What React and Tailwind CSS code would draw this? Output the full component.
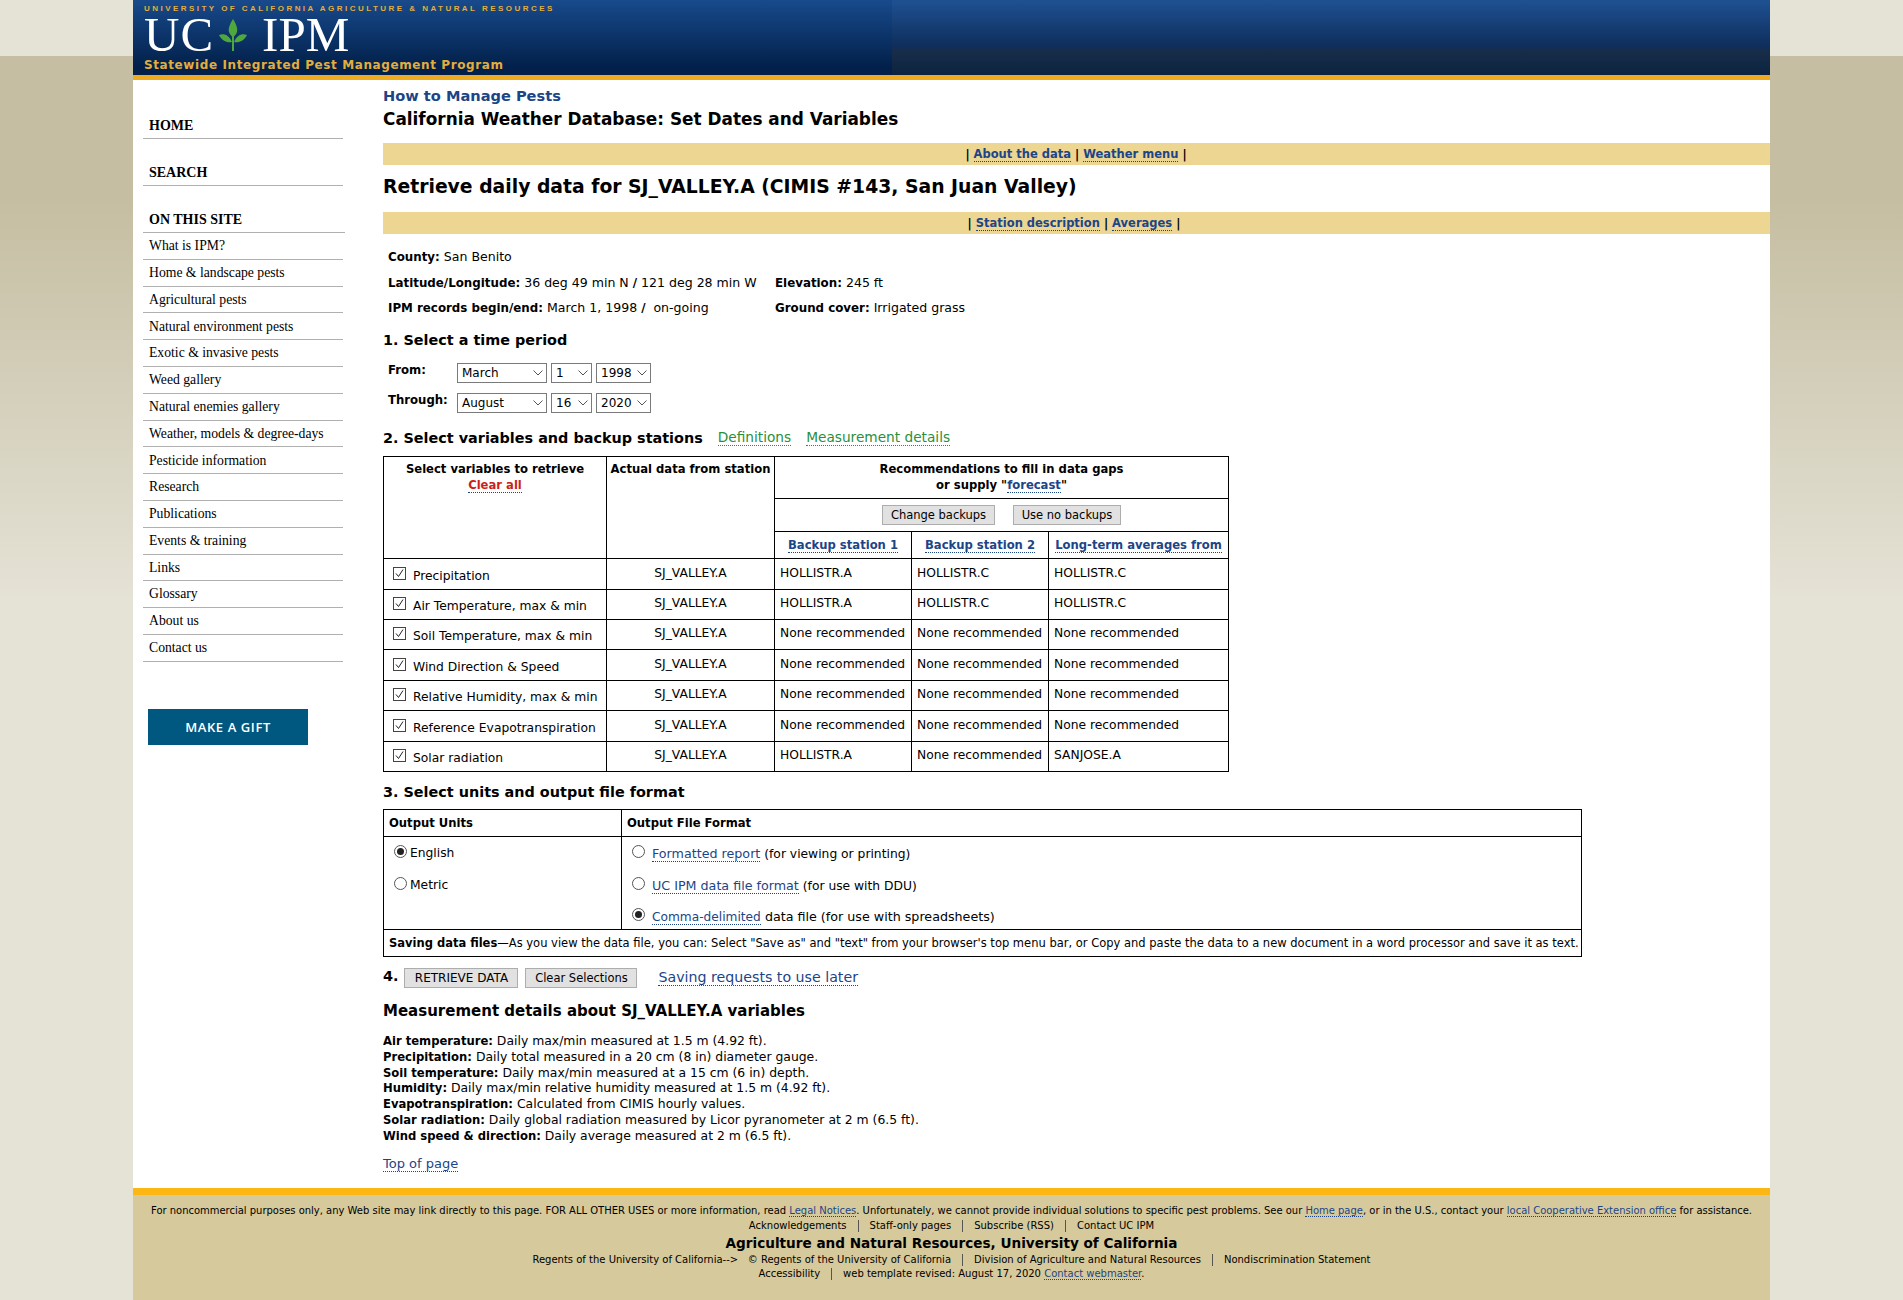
import React from 'react';

const verdana = "font-['DejaVu_Sans',Verdana,sans-serif]";
const serif = "font-['Liberation_Serif',Georgia,serif]";
const link = 'text-[#1c4587] border-b border-dotted border-[#1c4587]';

const sideLinks = [
  'What is IPM?',
  'Home & landscape pests',
  'Agricultural pests',
  'Natural environment pests',
  'Exotic & invasive pests',
  'Weed gallery',
  'Natural enemies gallery',
  'Weather, models & degree-days',
  'Pesticide information',
  'Research',
  'Publications',
  'Events & training',
  'Links',
  'Glossary',
  'About us',
  'Contact us',
];

const none = 'None recommended';
const variables = [
  { name: 'Precipitation', h: 'h-[31px]', b1: 'HOLLISTR.A', b2: 'HOLLISTR.C', avg: 'HOLLISTR.C' },
  { name: 'Air Temperature, max & min', h: 'h-[30px]', b1: 'HOLLISTR.A', b2: 'HOLLISTR.C', avg: 'HOLLISTR.C' },
  { name: 'Soil Temperature, max & min', h: 'h-[30px]', b1: none, b2: none, avg: none },
  { name: 'Wind Direction & Speed', h: 'h-[31px]', b1: none, b2: none, avg: none },
  { name: 'Relative Humidity, max & min', h: 'h-[30px]', b1: none, b2: none, avg: none },
  { name: 'Reference Evapotranspiration', h: 'h-[31px]', b1: none, b2: none, avg: none },
  { name: 'Solar radiation', h: 'h-[30px]', b1: 'HOLLISTR.A', b2: none, avg: 'SANJOSE.A' },
];

const details = [
  ['Air temperature:', 'Daily max/min measured at 1.5 m (4.92 ft).'],
  ['Precipitation:', 'Daily total measured in a 20 cm (8 in) diameter gauge.'],
  ['Soil temperature:', 'Daily max/min measured at a 15 cm (6 in) depth.'],
  ['Humidity:', 'Daily max/min relative humidity measured at 1.5 m (4.92 ft).'],
  ['Evapotranspiration:', 'Calculated from CIMIS hourly values.'],
  ['Solar radiation:', 'Daily global radiation measured by Licor pyranometer at 2 m (6.5 ft).'],
  ['Wind speed & direction:', 'Daily average measured at 2 m (6.5 ft).'],
];

function Dropdown({ value, options, width }) {
  return (
    <div className={`relative h-5 ${width}`}>
      <select
        defaultValue={value}
        className="h-5 w-full appearance-none border border-[#7a7a7a] bg-white pl-[4px] text-[12px] leading-[18px] text-black"
      >
        {options.map((o) => (
          <option key={o}>{o}</option>
        ))}
      </select>
      <svg className="pointer-events-none absolute right-[4px] top-[7px] h-[6px] w-[10px]" viewBox="0 0 10 6" fill="none" stroke="#555" strokeWidth="1">
        <path d="M.5.5 5 5 9.500.5" />
      </svg>
    </div>
  );
}

function Checkbox() {
  return (
    <span className="relative inline-block h-[13px] w-[13px] shrink-0 border border-[#444] bg-white">
      <svg className="absolute left-[1px] top-[1px] h-[9px] w-[9px]" viewBox="0 0 9 9" fill="none" stroke="#222" strokeWidth="1">
        <path d="M1 4.500 3.500 7.500 8 .5" />
      </svg>
    </span>
  );
}

function Radio({ checked }) {
  return (
    <span className="inline-flex h-[13px] w-[13px] shrink-0 items-center justify-center rounded-full border border-[#555] bg-white">
      {checked && <span className="h-[7px] w-[7px] rounded-full bg-[#222]" />}
    </span>
  );
}

// size carries the width and the font size of each button
function GrayButton({ children, size }) {
  return (
    <button className={`h-5 ${size} border border-[#adadad] bg-[#e1e1e1] leading-[18px] text-black`}>
      {children}
    </button>
  );
}

function Sidebar() {
  return (
    <aside className={`w-[250px] shrink-0 pl-[10px] ${serif}`}>
      <div className="mt-[17px] flex h-[42px] w-[200px] items-end border-b border-[#b0b0b0] pb-[2px] pl-[6px] text-[14px] font-bold text-black">HOME</div>
      <div className="mt-[20px] flex h-[27px] w-[200px] items-end border-b border-[#b0b0b0] pb-[2px] pl-[6px] text-[14px] font-bold text-black">SEARCH</div>
      <div className="mt-[20px] flex h-[27px] w-[202px] items-end border-b border-[#b0b0b0] pb-[2px] pl-[6px] text-[14px] font-bold text-black">ON THIS SITE</div>
      <ul>
        {sideLinks.map((s) => (
          <li key={s} className="flex h-[26.8px] w-[200px] items-center border-b border-[#b0b0b0] pl-[6px] pt-[1px] text-[13.700px] text-black">
            {s}
          </li>
        ))}
      </ul>
      <a className="ml-[5px] mt-[47px] flex h-9 w-40 items-center justify-center bg-[#00577f] pt-[1px] font-['Open_Sans',sans-serif] text-[13px] font-semibold tracking-[0.6px] text-white">
        MAKE A GIFT
      </a>
    </aside>
  );
}

function Band({ children, pad }) {
  return (
    <div className={`flex h-[22px] items-end justify-center bg-[#edd592] pb-[3px] text-[11.500px] font-bold leading-[14px] text-black ${pad}`}>
      {children}
    </div>
  );
}

function Th({ children, className = '', ...rest }) {
  return <th {...rest} className={`border border-black text-[11.600px] font-bold text-black ${className}`}>{children}</th>;
}

function VariablesTable() {
  return (
    <table className="w-[846px] table-fixed border-collapse border border-black text-[12.300px] text-black">
      <colgroup>
        <col className="w-[223px]" />
        <col className="w-[168px]" />
        <col className="w-[137px]" />
        <col className="w-[137px]" />
        <col />
      </colgroup>
      <tbody>
        <tr className="h-[42px]">
          <Th rowSpan={3} className="align-top pt-[4px] leading-[16px]">
            Select variables to retrieve
            <br />
            <a className="text-[#cc1f1a] border-b border-dotted border-[#1c4587]">Clear all</a>
          </Th>
          <Th rowSpan={3} className="align-top pt-[4px] leading-[16px] whitespace-nowrap">Actual data from station</Th>
          <Th className="align-top pt-[4px] leading-[16px]" colSpan={3}>
            Recommendations to fill in data gaps
            <br />
            or supply "<a className={link}>forecast</a>"
          </Th>
        </tr>
        <tr className="h-[33px]">
          <td colSpan={3} className="border border-black">
            <div className="flex justify-center gap-[18px]">
              <GrayButton size="w-[113px] text-[11.500px]">Change backups</GrayButton>
              <GrayButton size="w-[108px] text-[11.500px]">Use no backups</GrayButton>
            </div>
          </td>
        </tr>
        <tr className="h-[27px]">
          <Th className="pt-[2px]"><a className={link}>Backup station 1</a></Th>
          <Th className="pt-[2px]"><a className={link}>Backup station 2</a></Th>
          <Th className="whitespace-nowrap pt-[2px]"><a className={link}>Long-term averages from</a></Th>
        </tr>
        {variables.map((v) => (
          <tr key={v.name} className={v.h}>
            <td className="border border-black pl-[9px]">
              <div className="flex items-start gap-[7px] whitespace-nowrap">
                <Checkbox />
                <span className="translate-y-[2px] leading-[15px]">{v.name}</span>
              </div>
            </td>
            <td className="border border-black text-center">
              <span className="relative -top-[1px]">SJ_VALLEY.A</span>
            </td>
            <td className="border border-black pl-[5px] whitespace-nowrap"><span className="relative -top-[1px]">{v.b1}</span></td>
            <td className="border border-black pl-[5px] whitespace-nowrap"><span className="relative -top-[1px]">{v.b2}</span></td>
            <td className="border border-black pl-[5px] whitespace-nowrap"><span className="relative -top-[1px]">{v.avg}</span></td>
          </tr>
        ))}
      </tbody>
    </table>
  );
}

function OutputTable() {
  return (
    <table className="w-[1199px] table-fixed border-collapse border border-black text-[12.300px] text-black">
      <colgroup>
        <col className="w-[238px]" />
        <col />
      </colgroup>
      <tbody>
        <tr className="h-[27px]">
          <Th className="text-left pl-[5px] pt-[2px]">Output Units</Th>
          <Th className="text-left pl-[5px] pt-[2px]">Output File Format</Th>
        </tr>
        <tr className="h-[93px]">
          <td className="border border-black pl-[10px] align-top pt-[8px]">
            <div className="flex h-[32px] items-start gap-[3px]"><Radio checked /><span className="translate-y-[1px] leading-[15px]">English</span></div>
            <div className="flex items-start gap-[3px]"><Radio /><span className="translate-y-[1px] leading-[15px]">Metric</span></div>
          </td>
          <td className="border border-black pl-[10px] align-top pt-[8px]">
            <div className="flex h-[32px] items-start gap-[7px]"><Radio /><span className="translate-y-[1px] leading-[15px]"><a className={`${link} text-[12.700px]`}>Formatted report</a> (for viewing or printing)</span></div>
            <div className="flex h-[31px] items-start gap-[7px]"><Radio /><span className="translate-y-[1px] leading-[15px]"><a className={`${link} text-[12.700px]`}>UC IPM data file format</a> (for use with DDU)</span></div>
            <div className="flex items-start gap-[7px]"><Radio checked /><span className="translate-y-[1px] text-[12.700px] leading-[15px]"><a className={`${link} text-[12.200px]`}>Comma-delimited</a> data file (for use with spreadsheets)</span></div>
          </td>
        </tr>
        <tr className="h-[27px]">
          <td colSpan={2} className="border border-black pl-[5px] pt-[2px] text-[11.500px] whitespace-nowrap">
            <b>Saving data files</b>—As you view the data file, you can: Select "Save as" and "text" from your browser's top menu bar, or Copy and paste the data to a new document in a word processor and save it as text.
          </td>
        </tr>
      </tbody>
    </table>
  );
}

function Footer() {
  const Sep = () => <span className="mx-[11px] inline-block h-[12px] border-l border-[#555] align-middle" />;
  return (
    <footer className={`h-[112px] shrink-0 border-t-[7px] border-[#fdb714] bg-[#d6c99b] pt-[8px] text-center text-[10px] leading-[15px] text-black ${verdana}`}>
      <p className="whitespace-nowrap text-[9.970px]">
        For noncommercial purposes only, any Web site may link directly to this page. FOR ALL OTHER USES or more information, read <a className={link}>Legal Notices</a>. Unfortunately, we cannot provide individual solutions to specific pest problems. See our <a className={link}>Home page</a>, or in the U.S., contact your <a className={link}>local Cooperative Extension office</a> for assistance.
      </p>
      <p>Acknowledgements<Sep />Staff-only pages<Sep />Subscribe (RSS)<Sep />Contact UC IPM</p>
      <p className="mt-[1px] text-[13.600px] font-bold leading-[18px]">Agriculture and Natural Resources, University of California</p>
      <p>Regents of the University of California--&gt;&nbsp;&nbsp; © Regents of the University of California<Sep />Division of Agriculture and Natural Resources<Sep />Nondiscrimination Statement</p>
      <p className="-mt-[1px]">Accessibility<Sep />web template revised: August 17, 2020 <a className={link}>Contact webmaster</a>.</p>
    </footer>
  );
}

export default function App() {
  const months = ['March', 'August'];
  return (
    <div className="min-h-[1300px] w-full bg-[linear-gradient(to_bottom,#e5e2d6_0,#e5e2d6_56px,#c5bea2_56px,#c5bea2_200px,#e5e2d6_600px,#e5e2d6_100%)]">
      <div className="mx-[133px] flex h-[1300px] flex-col bg-white">
        <header className="relative h-[80px] shrink-0 border-b-[5px] border-[#eeab1f] bg-[linear-gradient(to_bottom,#1f5192,#0f2f5e_60%,#182c48_70%,#0a2440)]">
          <div className="absolute inset-y-0 left-0 w-[759px] bg-[linear-gradient(to_bottom,#184a8c,#02204a_90%)] pl-[11px]">
            <p className="pt-[4px] font-['Liberation_Sans',sans-serif] text-[8px] font-bold leading-[10px] tracking-[2.460px] text-[#e2ae3c] whitespace-nowrap">
              UNIVERSITY OF CALIFORNIA AGRICULTURE &amp; NATURAL RESOURCES
            </p>
            <div className={`mt-[1px] flex h-[40px] items-center text-[49px] leading-[40px] text-white ${serif}`}>
              <span className="tracking-[1px]">UC</span>
              <svg className="mx-[4px] h-[34px] w-[30px]" viewBox="0 0 30 34" fill="#4fa83d">
                <path d="M15 1C12 6 10 10 11 14 12 17 14 18 14.200 19L15.800 19C16 18 18 17 19 14 20 10 18 6 15 1Z" />
                <path d="M1 17C6 15 11 17 14 24 9 25 4 23 1 17Z" />
                <path d="M29 17C24 15 19 17 16 24 21 25 26 23 29 17Z" />
                <rect x="14" y="18" width="2" height="15" />
              </svg>
              <span className="ml-[10px]">IPM</span>
            </div>
            <p className={`mt-[3px] text-[12px] font-bold leading-[15px] tracking-[0.6px] text-[#e2ae3c] whitespace-nowrap ${verdana}`}>
              Statewide Integrated Pest Management Program
            </p>
          </div>
        </header>
        <div className="flex min-h-0 flex-1">
          <Sidebar />
          <main className={`min-w-0 flex-1 text-[12.400px] text-black ${verdana}`}>
            <h3 className="mt-[7px] text-[14.600px] font-bold leading-[18px] text-[#1c4587]">How to Manage Pests</h3>
            <h2 className="mt-[4px] text-[16.900px] font-bold leading-[20px]">California Weather Database: Set Dates and Variables</h2>
            <div className="mt-[14px]">
              <Band pad="pr-[1px]">| <a className={`${link} mx-[4px]`}>About the data</a> | <a className={`${link} mx-[4px]`}>Weather menu</a> |</Band>
            </div>
            <h1 className="mt-[10px] h-[23px] text-[18.800px] font-bold leading-[23px]">Retrieve daily data for SJ_VALLEY.A (CIMIS #143, San Juan Valley)</h1>
            <div className="mt-[14px]">
              <Band pad="pr-[5px]">| <a className={`${link} mx-[4px]`}>Station description</a> | <a className={`${link} mx-[4px]`}>Averages</a> |</Band>
            </div>
            <div className="mt-[15px] pl-[5px] text-[12.550px] leading-[16px] [&_b]:text-[11.850px]">
              <p><b>County:</b> San Benito</p>
              <div className="mt-[10px] grid grid-cols-[387px_1fr] gap-y-[9px]">
                <p><b>Latitude/Longitude:</b> 36 deg 49 min N <b>/</b> 121 deg 28 min W</p>
                <p><b>Elevation:</b> 245 ft</p>
                <p><b>IPM records begin/end:</b> March 1, 1998 <b>/</b>&nbsp; on-going</p>
                <p><b>Ground cover:</b> Irrigated grass</p>
              </div>
            </div>
            <h4 className="mt-[14px] text-[14.400px] font-bold leading-[20px]">1. Select a time period</h4>
            <div className="mt-[13px] grid w-fit grid-cols-[65px_90px_41px_55px] gap-x-[4px] gap-y-[10px] pl-[5px] [&_b]:text-[11.700px]">
              <b className="-mt-[1px] -mr-[4px]">From:</b>
              <Dropdown value="March" options={months} width="w-[90px]" />
              <Dropdown value="1" options={['1', '16']} width="w-[41px]" />
              <Dropdown value="1998" options={['1998', '2020']} width="w-[55px]" />
              <b className="-mt-[1px] -mr-[4px]">Through:</b>
              <Dropdown value="August" options={months} width="w-[90px]" />
              <Dropdown value="16" options={['1', '16']} width="w-[41px]" />
              <Dropdown value="2020" options={['1998', '2020']} width="w-[55px]" />
            </div>
            <div className="mt-[15px] flex h-[20px] items-center">
              <h4 className="text-[14.400px] font-bold leading-[20px]">2. Select variables and backup stations</h4>
              <a className="ml-[15px] border-b border-dotted border-[#2a8f3c] text-[13.700px] leading-[15px] text-[#2a8f3c]">Definitions</a>
              <a className="ml-[15px] border-b border-dotted border-[#2a8f3c] text-[13.700px] leading-[15px] text-[#2a8f3c]">Measurement details</a>
            </div>
            <div className="mt-[8px]"><VariablesTable /></div>
            <h4 className="mt-[10px] text-[14.400px] font-bold leading-[20px]">3. Select units and output file format</h4>
            <div className="mt-[7px]"><OutputTable /></div>
            <div className="mt-[11px] flex h-5 items-center">
              <b className="mr-[6px] -mt-[2px] text-[14.400px]">4.</b>
              <GrayButton size="w-[114px] text-[12px]">RETRIEVE DATA</GrayButton>
              <span className="ml-[7px]"><GrayButton size="w-[112px] text-[11.500px]">Clear Selections</GrayButton></span>
              <a className={`${link} ml-[21px] text-[14.200px] leading-[15px]`}>Saving requests to use later</a>
            </div>
            <h4 className="mt-[13px] text-[15px] font-bold leading-[20px]">Measurement details about SJ_VALLEY.A variables</h4>
            <div className="mt-[12px] leading-[15.800px] [&_b]:text-[11.600px] [&_b]:leading-none">
              {details.map(([label, text]) => (
                <p key={label}><b>{label}</b> {text}</p>
              ))}
            </div>
            <p className="mt-[10px] text-[13px]"><a className={link}>Top of page</a></p>
          </main>
        </div>
        <Footer />
      </div>
    </div>
  );
}
